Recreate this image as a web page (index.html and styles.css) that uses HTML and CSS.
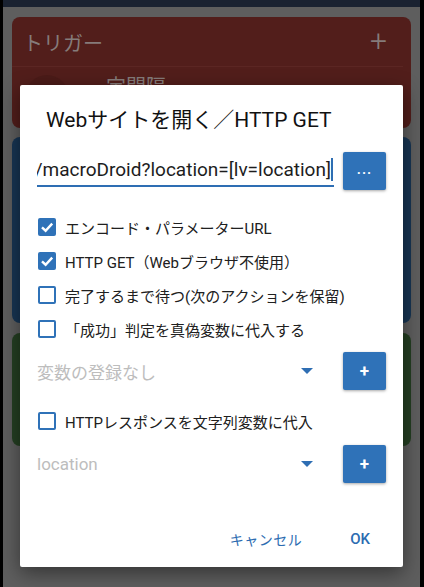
FILE: index.html
```html
<!DOCTYPE html>
<html lang="ja">
<head>
<meta charset="utf-8">
<link rel="stylesheet" href="styles.css">
</head>
<body>
<div class="screen">
  <div class="edge-left"></div>
  <div class="main">
    <div class="statusbar"></div>
    <div class="cards">
      <div class="card card-red">
        <div class="card-head">
          <span class="card-title">トリガー</span>
          <span class="card-plus">+</span>
        </div>
        <div class="card-item">
          <span class="item-icon"></span>
          <span class="item-text">定間隔</span>
        </div>
      </div>
      <div class="card card-blue"></div>
      <div class="card card-green"></div>
    </div>

    <div class="dialog">
      <div class="dialog-title">Webサイトを開く／HTTP GET</div>
      <div class="url-row">
        <div class="url-input"><span class="url-text">/macroDroid?location=[lv=location]</span><span class="caret"></span></div>
        <button class="sq-btn dots">...</button>
      </div>
      <div class="checks">
        <label class="check-row"><span class="box checked"><svg viewBox="0 0 18 18"><path d="M4 9.3 L7.6 12.7 L14.2 5.6" fill="none" stroke="#fff" stroke-width="2.4"/></svg></span><span class="check-label">エンコード・パラメーターURL</span></label>
        <label class="check-row"><span class="box checked"><svg viewBox="0 0 18 18"><path d="M4 9.3 L7.6 12.7 L14.2 5.6" fill="none" stroke="#fff" stroke-width="2.4"/></svg></span><span class="check-label">HTTP GET（Webブラウザ不使用）</span></label>
        <label class="check-row"><span class="box"></span><span class="check-label">完了するまで待つ(次のアクションを保留)</span></label>
        <label class="check-row"><span class="box"></span><span class="check-label">「成功」判定を真偽変数に代入する</span></label>
      </div>
      <div class="spinner-row first">
        <div class="spinner"><span class="spinner-text">変数の登録なし</span><span class="tri"></span></div>
        <button class="sq-btn plus">+</button>
      </div>
      <div class="checks single">
        <label class="check-row"><span class="box"></span><span class="check-label">HTTPレスポンスを文字列変数に代入</span></label>
      </div>
      <div class="spinner-row second">
        <div class="spinner"><span class="spinner-text">location</span><span class="tri"></span></div>
        <button class="sq-btn plus">+</button>
      </div>
      <div class="actions">
        <button class="text-btn cancel">キャンセル</button>
        <button class="text-btn ok">OK</button>
      </div>
    </div>
  </div>
  <div class="edge-right"></div>
</div>
</body>
</html>
```

FILE: styles.css
```css
* { box-sizing: border-box; }
html, body {
  margin: 0;
  padding: 0;
  width: 424px;
  height: 587px;
  overflow: hidden;
  font-family: Roboto, "Noto Sans CJK JP", sans-serif;
}
.screen {
  display: flex;
  width: 424px;
  height: 587px;
}
.edge-left { width: 3px; background: #000; }
.edge-right { width: 4px; background: #000; }
.main {
  flex: 1;
  position: relative;
  background: #5e5e5e;
}
.statusbar {
  height: 7px;
  background: #1a2231;
}
.cards {
  display: flex;
  flex-direction: column;
  gap: 9px;
  padding: 10px 9px 0 9px;
}
.card {
  border-radius: 8px;
}
.card-red { background: #521e1b; height: 111px; }
.card-blue { background: #173553; height: 186px; }
.card-green { background: #243f22; height: 113px; margin-top: 1px; }
.card-head {
  display: flex;
  justify-content: space-between;
  align-items: center;
  height: 50px;
  padding: 0 16px 0 11px;
  border-bottom: 1px solid #5b2623;
  margin: 0 8px 0 0;
}
.card-title {
  font-size: 20px;
  color: #857b7a;
  padding-top: 1px;
}
.card-plus {
  font-size: 30px;
  font-weight: 300;
  color: #857b7a;
  line-height: 1;
  margin-top: -2px;
}
.card-item {
  display: flex;
  align-items: flex-start;
  gap: 37px;
  padding: 8px 0 0 13px;
}
.item-icon {
  width: 44px;
  height: 44px;
  border-radius: 50%;
  background: #4b1b18;
}
.item-text {
  font-size: 20px;
  color: #857b7a;
  line-height: 24px;
}

/* dialog */
.dialog {
  position: absolute;
  left: 17px;
  top: 85px;
  width: 383px;
  height: 482px;
  background: #fff;
  border-radius: 2px;
  box-shadow: 0 6px 20px rgba(0,0,0,0.45);
}
.dialog-title {
  padding: 21px 0 0 26px;
  height: 49px;
  line-height: 28px;
  font-size: 21px;
  color: #111;
}
.url-row {
  display: flex;
  gap: 9px;
  margin-top: 18px;
  padding: 0 17px;
  height: 38px;
  align-items: flex-start;
}
.url-input {
  flex: 1;
  height: 35px;
  border-bottom: 2px solid #2e6eb3;
  overflow: hidden;
  display: flex;
  justify-content: flex-end;
  align-items: center;
  white-space: nowrap;
  padding-top: 1px;
  padding-right: 1px;
}
.url-text {
  font-size: 19px;
  color: #1d1d1d;
  flex-shrink: 0;
}
.caret {
  width: 2px;
  height: 23px;
  background: #2e6eb3;
  flex-shrink: 0;
}
.sq-btn {
  width: 43px;
  height: 38px;
  border: none;
  border-radius: 2px;
  background: #2f72b8;
  color: #fff;
  font-family: Roboto, sans-serif;
  font-weight: 500;
  font-size: 15px;
  box-shadow: 0 1px 3px rgba(0,0,0,0.35);
  padding: 0;
  flex-shrink: 0;
}
.sq-btn.dots { padding-bottom: 4px; letter-spacing: 1px; }
.sq-btn.plus { font-size: 17px; font-weight: 700; }

.checks {
  margin-top: 20px;
  padding-left: 18px;
  display: flex;
  flex-direction: column;
}
.checks.single { margin-top: 14px; }
.check-row {
  height: 34px;
  display: flex;
  align-items: center;
  gap: 9px;
}
.box {
  width: 18px;
  height: 18px;
  border: 2px solid #2f72b8;
  border-radius: 2px;
  background: #fff;
  display: flex;
  flex-shrink: 0;
}
.box.checked {
  background: #2f72b8;
  border: none;
}
.box svg { width: 18px; height: 18px; }
.check-label {
  font-size: 15px;
  color: #202020;
  white-space: nowrap;
}

.spinner-row {
  display: flex;
  gap: 9px;
  padding: 0 17px;
  height: 38px;
  align-items: center;
}
.spinner-row.first { margin-top: 6px; }
.spinner-row.second { margin-top: 7px; }
.spinner {
  flex: 1;
  display: flex;
  justify-content: space-between;
  align-items: center;
  padding-right: 21px;
}
.spinner-text {
  font-size: 17px;
  color: #bdbdbd;
}
.tri {
  width: 0;
  height: 0;
  border-left: 6px solid transparent;
  border-right: 6px solid transparent;
  border-top: 6px solid #2e6eb3;
}

.actions {
  display: flex;
  justify-content: flex-end;
  gap: 16px;
  margin-top: 38px;
  padding-right: 17px;
  height: 36px;
}
.text-btn {
  border: none;
  background: transparent;
  color: #2c6cb1;
  font-family: Roboto, "Noto Sans CJK JP", sans-serif;
  font-size: 14px;
  padding: 0 16px;
  height: 36px;
}
.text-btn.cancel { letter-spacing: 0.5px; }
.text-btn.ok { font-weight: 500; font-size: 15px; }
```
